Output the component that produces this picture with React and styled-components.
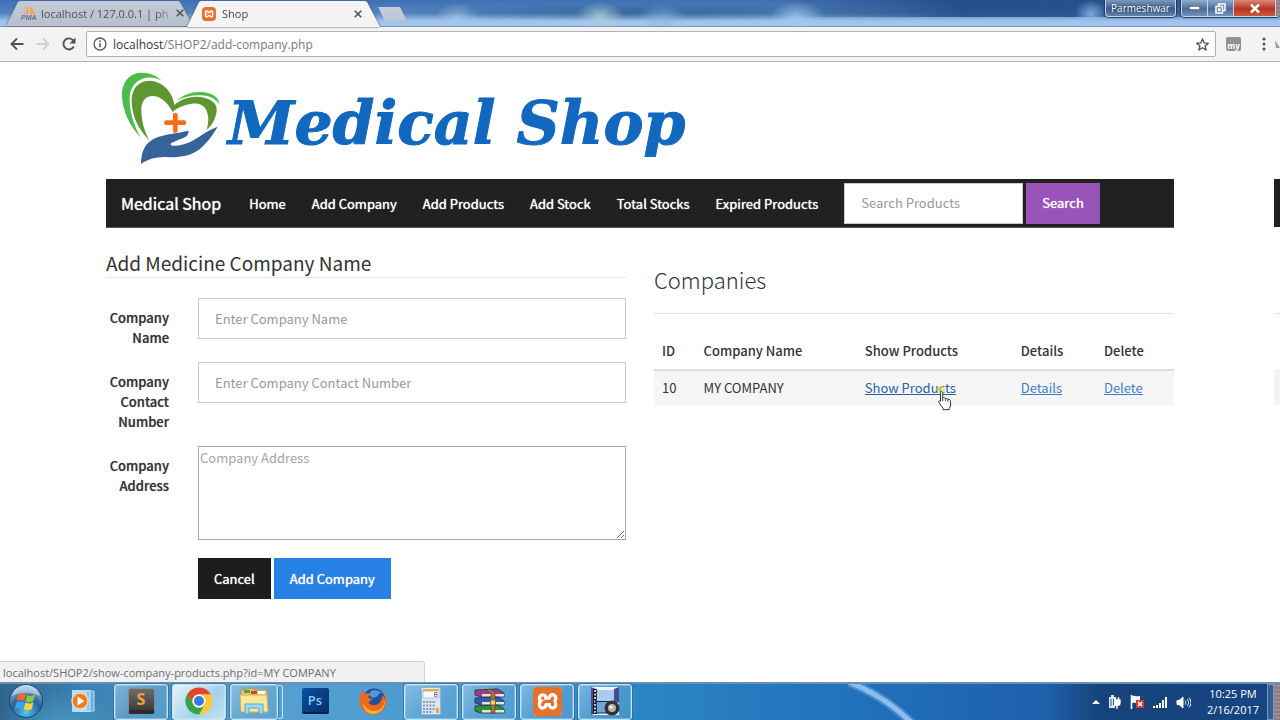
import React from 'react';
import styled, { createGlobalStyle, css } from 'styled-components';
import { SiXampp } from 'react-icons/si';

const GlobalStyle = createGlobalStyle`
  *, *::before, *::after { box-sizing: border-box; }
  body {
    margin: 0;
    background: #fff;
    color: #333;
    font: 13px/20px "Noto Sans CJK SC", "Noto Sans", sans-serif;
  }
  button, input, textarea { font: inherit; margin: 0; border-radius: 0; }
  svg { flex-shrink: 0; }
`;

const chromeFont = css`
  font-family: "Open Sans", "Noto Sans", sans-serif;
`;

const Window = styled.div`
  display: flex;
  flex-direction: column;
  min-height: 100vh;
  overflow: hidden;
`;

/* ---------- title bar and tabs ---------- */

const TitleBar = styled.header`
  ${chromeFont}
  position: relative;
  display: flex;
  justify-content: space-between;
  height: 27px;
  border-bottom: 1px solid #8094ae;
  background:
    radial-gradient(ellipse 22px 14px at 457px 17px, #a3c9e8aa, transparent),
    radial-gradient(ellipse 24px 14px at 600px 16px, #b0d4d8cc, transparent),
    radial-gradient(ellipse 26px 14px at 662px 18px, #88b6e4aa, transparent),
    radial-gradient(ellipse 28px 16px at 797px 17px, #a0cdf0cc, transparent),
    radial-gradient(ellipse 16px 14px at 1091px 14px, #8fc0f4cc, transparent),
    radial-gradient(ellipse 260px 9px at 650px 12px, #2d5c8cb0, transparent),
    linear-gradient(90deg, transparent 60%, #1d467ecc 75%, #1d4a82cc 88%, transparent) 0 0 / 100% 17px no-repeat,
    linear-gradient(#3f70b4, #5483be 50%, #9dc1ed 80%, #a7c8ef);
`;

const TabStrip = styled.nav`
  display: flex;
  padding-left: 6px;
`;

const TabShadow = styled.div`
  position: relative;
  z-index: ${(p) => (p.$active ? 2 : 1)};
  margin-bottom: ${(p) => (p.$active ? '-1px' : '0')};
  margin-right: -6px;
  filter: drop-shadow(0 0 1px #4a5a70);
`;

const Tab = styled.div`
  display: flex;
  align-items: center;
  gap: ${(p) => (p.$active ? '6px' : '5px')};
  width: ${(p) => (p.$active ? '193px' : '187px')};
  height: 100%;
  padding: ${(p) => (p.$active ? '0 15px' : '0 6px 0 15px')};
  clip-path: polygon(0 100%, 12px 2px, 14px 1px, calc(100% - 15px) 1px, calc(100% - 13px) 2px, 100% 100%);
  background: ${(p) => (p.$active ? '#f4f4f4' : 'linear-gradient(#c3cbd6, #b7c0ce)')};
  color: ${(p) => (p.$active ? '#444' : '#4b5058')};
  font-size: 11px;
  line-height: 16px;
`;

const TabTitle = styled.span`
  flex: 1;
  padding-top: 1px;
  white-space: nowrap;
  mask-image: linear-gradient(90deg, #000 90%, #0006);
`;

const TabClose = styled.button`
  display: flex;
  padding: 3px;
  border: 0;
  background: none;
  color: #555;
`;

const NewTab = styled.button`
  width: 29px;
  height: 14px;
  margin: 7px 0 0 4px;
  border: 0;
  clip-path: polygon(0 0, 22px 0, 100% 100%, 7px 100%);
  background: linear-gradient(#c4ced9, #bcc6d2);
`;

const WindowControls = styled.div`
  display: flex;
  gap: 5px;
  height: 17px;
  color: #fff;
`;

const glass = css`
  border: 1px solid #c3d3e8;
  border-top: 0;
  border-radius: 0 0 4px 4px;
  box-shadow: 0 0 1px 1px #203a5c;
`;

const UserBadge = styled.button`
  ${glass}
  width: 71px;
  padding: 0;
  background: linear-gradient(#7c98bc, #3c5e8c 55%, #6584ac);
  color: #fff;
  font-size: 10px;
  line-height: 16px;
  text-shadow: 0 0 2px #123;
`;

const ControlGroup = styled.div`
  ${glass}
  display: flex;
  overflow: hidden;
  border-right: 0;
`;

const ControlButton = styled.button`
  display: flex;
  align-items: center;
  justify-content: center;
  width: ${(p) => (p.$close ? '42px' : '26px')};
  padding: 0;
  border: 0;
  border-right: 1px solid #c3d3e8;
  background: ${(p) => (p.$close
    ? 'linear-gradient(#d88a78, #b83420 55%, #cc5a3c)'
    : 'linear-gradient(#93abc9, #4b6b98 55%, #7393b8)')};
`;

const EdgeNoise = styled.i`
  align-self: stretch;
  width: ${(p) => p.$w}px;
  background: repeating-linear-gradient(#b46a78 0 1px, #7da09a 1px 2px, #a08a6c 2px 3px, #7480a8 3px 4px);
`;

/* ---------- address bar ---------- */

const Toolbar = styled.div`
  ${chromeFont}
  display: flex;
  align-items: center;
  height: 35px;
  padding-left: 8px;
  border-bottom: 1px solid #b4b4b6;
  background: #f3f3f4;
`;

const IconButton = styled.button`
  display: flex;
  align-items: center;
  justify-content: center;
  width: ${(p) => p.$w}px;
  padding: 0;
  border: 0;
  background: none;
  color: ${(p) => (p.$dim ? '#cfcfd0' : '#505255')};
`;

const AddressBar = styled.div`
  display: flex;
  flex: 1;
  align-items: center;
  gap: 6px;
  height: 26px;
  margin-left: 8px;
  padding: 0 6px;
  border: 1px solid #b0b2b5;
  border-radius: 2px;
  background: #fff;
`;

const AddressField = styled.div`
  flex: 1;
  padding-top: 1px;
  font-size: 12px;
  line-height: 18px;
  color: #77797c;
  b { font-weight: 400; color: #35373a; }
`;

const Extension = styled.span`
  display: flex;
  align-items: flex-end;
  justify-content: center;
  width: 15px;
  height: 14px;
  margin: 0 12px 0 10px;
  border-radius: 2px;
  background: #929292;
  color: #fff;
  font-size: 8px;
  font-weight: 700;
  line-height: 11px;
`;

/* ---------- page ---------- */

const Page = styled.main`
  position: relative;
  flex: 1;
  padding: 10px 106px 32px;
`;

const Logo = styled.a`
  display: flex;
  gap: 8px;
  height: 107px;
  padding-left: 16px;
  color: #1268bf;
  text-decoration: none;
`;

const LogoText = styled.span`
  font: italic 700 60px/102px "DejaVu Serif", serif;
  -webkit-text-stroke: 1px #1268bf;
  white-space: nowrap;
`;

const NavBar = styled.nav`
  display: flex;
  align-items: center;
  min-height: 49px;
  padding: 0 15px;
  border-bottom: 1px solid #5a5a5a;
  background: #212121;
  white-space: nowrap;
`;

const Brand = styled.a`
  margin-right: 28px;
  color: #fff;
  font-size: 16px;
  text-decoration: none;
  text-shadow: 0 0 1px #fff;
`;

const NavLinks = styled.div`
  display: flex;
  gap: 26px;
`;

const NavLink = styled.a`
  padding-top: 1px;
  color: #fff;
  text-decoration: none;
  text-shadow: 0 0 1px #fff;
`;

const SearchForm = styled.form`
  display: flex;
  gap: 3px;
  margin-left: 26px;
`;

const TextInput = styled.input`
  width: ${(p) => p.$w || '100%'};
  height: 41px;
  padding: 0 16px 1px;
  border: 1px solid #c8c9cc;
  background: #fff;
  color: #333;
  outline: 0;
  &::placeholder { color: #999; opacity: 1; }
`;

const tones = { dark: '#1d1d1d', blue: '#2780e3', purple: '#9954bb' };

const Button = styled.button`
  height: 41px;
  padding: 0 16px;
  border: 0;
  background: ${(p) => tones[p.$tone]};
  color: #fff;
  text-shadow: 0 0 1px #fff;
`;

const Columns = styled.div`
  display: grid;
  grid-template-columns: 1fr 1fr;
  gap: 28px;
`;

const FormTitle = styled.h1`
  margin: 20px 0;
  border-bottom: 1px solid #e8e8ea;
  font-size: 19px;
  font-weight: 400;
  line-height: 29px;
`;

const CompanyForm = styled.form`
  display: grid;
  grid-template-columns: 63px 1fr;
  gap: 14px 29px;
`;

const FieldLabel = styled.label`
  padding-top: 10px;
  font-weight: 500;
  text-align: right;
  text-shadow: 0 0 1px #3338;
`;

const AddressArea = styled.textarea`
  display: block;
  width: 100%;
  height: 94px;
  padding: 1px;
  border: 1px solid #a9a9a9;
  color: #333;
  outline: 0;
  resize: vertical;
  &::placeholder { color: #a5a5a5; opacity: 1; }
`;

const FormActions = styled.div`
  display: flex;
  grid-column: 2;
  gap: 3px;
  padding-top: 4px;
`;

const ListTitle = styled.h2`
  margin: 34px 0 19px;
  padding-bottom: 17px;
  border-bottom: 1px solid #e3e3e5;
  font-size: 22px;
  font-weight: 300;
  line-height: 34px;
`;

const Table = styled.table`
  width: 100%;
  border-collapse: collapse;
  table-layout: fixed;
`;

const HeadCell = styled.th`
  width: ${(p) => p.$w};
  padding: 8px;
  border-bottom: 2px solid #dcdcdd;
  font-weight: 500;
  text-align: left;
  white-space: nowrap;
`;

const Cell = styled.td`
  padding: 7px 8px 8px;
  background: #f5f5f5;
  white-space: nowrap;
`;

const CellLink = styled.a`
  position: relative;
  color: ${(p) => (p.$hover ? '#2a5fa8' : '#3d7ecb')};
  text-decoration: underline;
`;

const Pointer = styled.svg`
  position: absolute;
  right: 4px;
  top: 12px;
  overflow: visible;
`;

const EdgeGhost = styled.div`
  position: absolute;
  right: 0;
  width: 6px;
  top: ${(p) => p.$top}px;
  height: ${(p) => p.$h}px;
  background: ${(p) => p.$color};
`;

const StatusBubble = styled.div`
  ${chromeFont}
  position: absolute;
  left: 0;
  bottom: 0;
  width: 425px;
  padding: 2px 3px 1px;
  border: solid #d2d2d2;
  border-width: 1px 1px 0 0;
  border-radius: 0 3px 0 0;
  background: #f1f1f2;
  color: #6c6e70;
  font-size: 11px;
  line-height: 17px;
`;

/* ---------- taskbar ---------- */

const Taskbar = styled.footer`
  ${chromeFont}
  display: flex;
  justify-content: space-between;
  height: 38px;
  border-top: 2px solid #6c8fb2;
  background:
    radial-gradient(ellipse 60px 34px at 60px 40px, #4fa5c8aa, transparent),
    linear-gradient(90deg, #2d6590, #3a80b0 6%, #56a0d0 20%, #4b9bd0 34%, #2b85c4 50%, #2272bc 66%, #1e5faa 82%, #16437a 86%, #164583);
`;

const TaskItems = styled.div`
  display: flex;
  gap: 4px;
`;

const TaskItem = styled.button`
  position: relative;
  display: flex;
  align-items: center;
  justify-content: center;
  width: ${(p) => p.$w || 54}px;
  height: 36px;
  padding: 0 0 2px;
  border: 1px solid transparent;
  background: none;
  ${(p) => p.$open && css`
    border-color: #c4e4f6;
    border-radius: 3px;
    box-shadow: inset 0 0 0 1px #ffffff40, 0 0 0 1px #27608e80;
    background: linear-gradient(135deg, #b5daf088, #7cb8de66 50%, #62a8d666);
  `}
  ${(p) => p.$focused && css`
    background: linear-gradient(135deg, #e4f3fa, #a4d2ea 60%, #c0e2f2);
  `}
  ${(p) => p.$stacked && css`
    margin-right: 6px;
    &::after {
      content: "";
      position: absolute;
      top: 0;
      right: -6px;
      width: 5px;
      height: 34px;
      border: solid #c4e4f6;
      border-width: 1px 1px 1px 0;
      border-radius: 0 3px 3px 0;
    }
  `}
`;

const Xampp = styled.span`
  display: flex;
  padding: 1px;
  border-radius: 4px;
  background: #fff;
  color: #e8702a;
  box-shadow: inset 0 0 0 2px #e8702a;
`;

const PsTile = styled.span`
  width: 27px;
  height: 26px;
  border-bottom: 2px solid #061f4c;
  border-radius: 2px;
  background: linear-gradient(135deg, #0b50a0, #0a2f6c);
  color: #84ccf8;
  font-size: 13px;
  font-weight: 600;
  line-height: 24px;
`;

const SublimeTile = styled.span`
  width: 27px;
  height: 26px;
  border: 1px solid #8c8c8c;
  border-bottom: 4px solid #2c2c2c;
  border-radius: 3px;
  background: linear-gradient(#6c6c6c, #3c3c3c);
  color: #f2a03c;
  font-size: 16px;
  font-weight: 700;
  line-height: 20px;
`;

const LightStreak = styled.svg`
  margin-left: 50px;
`;

const Tray = styled.div`
  display: flex;
  align-items: center;
  color: #fff;
`;

const TrayIcons = styled.div`
  display: flex;
  align-items: center;
  gap: 8px;
  margin-right: 15px;
`;

const Clock = styled.time`
  width: 54px;
  margin-right: 7px;
  font-size: 11px;
  line-height: 16px;
  text-align: center;
  white-space: nowrap;
`;

const ShowDesktop = styled.button`
  align-self: stretch;
  width: 7px;
  padding: 0;
  border: 1px solid #7698c0;
  background: #32608f;
`;

/* ---------- drawings ---------- */

const CloseGlyph = () => (
  <svg width="8" height="8" viewBox="0 0 8 8" stroke="currentColor" strokeWidth="1.6"><path d="M.7.7l6.6 6.6M7.3.7L.7 7.3" /></svg>
);

const HeartLogo = () => (
  <svg width="98" height="93" viewBox="48 24 294 279">
    <path fill="#4cbd4c" d="M104 221C75 190 48 143 48 94 48 50 74 26 108 26c24 0 45 9 59 24-19-10-40-12-57-6-26 9-40 31-39 66 1 42 17 82 33 111z" />
    <path fill="#5f9632" d="M130 230C100 198 78 161 77 112c-1-36 20-62 53-62 38 0 71 34 75 73 24-22 62-30 92-21 27 7 37 22 35 39-2 20-12 41-30 57 5-20 7-37 2-51-7-25-27-31-50-27-25 4-44 14-54 24-16-31-39-49-62-48-22 1-32 19-32 42 0 33 10 66 24 92z" />
    <path fill="#4cbd4c" d="M212 110c18-16 43-26 70-26 34 0 58 15 58 37-13-20-34-28-61-27-25 0-47 6-67 16z" />
    <path fill="#35639a" d="M105 299c1-28 7-49 22-63 20-18 42-21 67-26 21-3 37-7 54-10-1 16-9 20-25 25l-25 11c-8 4-4 10 9 9 29-1 53-14 77-30 17-12 35-21 51-27-22 37-46 67-75 80-25 12-54 13-81 11-26-1-51 5-74 20z" />
    <path stroke="#f96b16" strokeWidth="14" strokeLinecap="round" d="M208 153v47M181 176h53" />
  </svg>
);

const HandPointer = () => (
  <Pointer width="14" height="20" viewBox="0 0 14 20" aria-hidden="true">
    <circle cx="3" cy="0" r="4" fill="#d8e040" opacity=".6" />
    <path d="M3 1.5c1.2 0 1.7.8 1.7 1.8v4.5c1.4-.5 2.4 0 2.7.8 1.2-.4 2.2 0 2.5.8 1.5-.3 2.6.4 2.6 2v3.600c0 1.500-.7 2.500-1.200 3.500v1.200H5v-1.500C3.700 16.500 2 14.500.8 12.200c-.5-1.200.7-2 1.700-1V3.300c0-1 0-1.800.5-1.800z" fill="#fff" stroke="#333" strokeWidth="1" />
    <path d="M4.700 8v3M7.400 8.800V11M9.900 9.700V12" stroke="#333" strokeWidth=".9" />
  </Pointer>
);

const PmaIcon = () => (
  <svg width="15" height="14" viewBox="0 0 15 14">
    <path d="M6 0c2 2 2 5 1 8H2c2-1 4-4 4-8zM8.500 1c3 1 5 4 5.500 7H8.500c.6-2 .6-4 0-7z" fill="#f5a544" />
    <text x="0" y="14" fontSize="7" fontWeight="700" fontStyle="italic" fill="#6c6c90" fontFamily="Liberation Sans">PMA</text>
  </svg>
);

const StartOrb = () => (
  <svg width="36" height="36" viewBox="0 0 36 36">
    <defs>
      <radialGradient id="orb" cx=".5" cy=".85" r=".9">
        <stop offset="0" stopColor="#55c4e8" /><stop offset=".5" stopColor="#24639c" /><stop offset="1" stopColor="#b8d4e6" />
      </radialGradient>
    </defs>
    <circle cx="18" cy="18" r="16.500" fill="url(#orb)" stroke="#1c4468" />
    <path d="M10 12c3-2 5-2 8-.5l-1.500 6.500c-3-1.500-5-1.300-8 .3z" fill="#ee6a2c" />
    <path d="M19 12c3 1.300 5 1.300 8-.5l-1.500 6.500c-3 1.800-5 1.600-8 .3z" fill="#8cc63e" />
    <path d="M8.300 19.500c3-1.600 5-1.800 8-.3L14.800 26c-3-1.500-5-1.500-8 .2z" fill="#3aa4e8" />
    <path d="M17.300 19.500c3 1.300 5 1.500 8-.3L23.800 26c-3 1.700-5 1.500-8 .2z" fill="#fcd23c" />
    <path d="M4 13C7 4 14 2 18 2s11 2 14 11c-8-4-20-4-28 0z" fill="#fff" opacity=".4" />
  </svg>
);

const MediaIcon = () => (
  <svg width="24" height="24" viewBox="0 0 24 24">
    <path d="M7 2h16v20H7z" fill="#6cb0d8" stroke="#b8dcf0" /><path d="M4 1.500h15v21H4z" fill="#90c8e4" stroke="#d0e8f4" />
    <path d="M1 1h15v22H1z" fill="#b8dcf0" />
    <circle cx="9" cy="12" r="8" fill="#f07c1c" stroke="#d8dce0" strokeWidth="1.500" /><path d="M6.500 7.500l7 4.500-7 4.500z" fill="#fff" />
  </svg>
);

const ChromeIcon = () => (
  <svg width="28" height="28" viewBox="0 0 28 28">
    <circle cx="14" cy="14" r="13.500" fill="#fcc934" />
    <path d="M2.300 7.250A13.500 13.500 0 0 1 25.700 7.250H14A6.750 6.750 0 0 0 8.150 17.400z" fill="#e2432f" />
    <path d="M2.300 7.250A13.500 13.500 0 0 0 14 27.500L19.850 17.400A6.750 6.750 0 0 1 8.150 17.400z" fill="#30a350" />
    <circle cx="14" cy="14" r="6.500" fill="#fff" /><circle cx="14" cy="14" r="5" fill="#3b78e7" />
  </svg>
);

const ExplorerIcon = () => (
  <svg width="30" height="28" viewBox="0 0 30 28">
    <path d="M2 3l11-2 2 2h13v22H2z" fill="#e9c964" stroke="#b89848" />
    <path d="M5 3h6v3H5z" fill="#49a84c" /><path d="M12 4h6v3h-6z" fill="#d84030" /><path d="M19 4h7v3h-7z" fill="#fff" />
    <path d="M1 8h27l1 17H2z" fill="#f7e79c" stroke="#cfae5c" />
    <path d="M6 27V17h18v10h-4v-6H10v6z" fill="#9ed8f2" stroke="#5ca4cc" />
  </svg>
);

const FirefoxIcon = () => (
  <svg width="28" height="28" viewBox="0 0 28 28">
    <circle cx="15" cy="12.500" r="11" fill="#234f9c" /><path d="M12 4c5-2 9 0 11 3-3-1-4 0-4 2l-5 2-4-3z" fill="#4e9ad8" />
    <path d="M3 4l3 3c2-1 4-1 6 0-2 1-3 2-2.500 4l4 .8c-1 2-3 2.200-4 3.400 1.500 3 6 3.500 9 2 3.500-2 5-5 4.500-9 2 1 2.500 3 2.700 4.500C27 6 24 3 22 2c5 3 6 8 5.500 13C26.500 22 21 27.500 14 27.500 6 27.500.5 21 .5 14 .5 10 1.500 6 3 4z" fill="#e76b1e" />
    <path d="M26 9c1 9-4 15-11 15-5 0-9-3-11-8 0 7 5 11 10 11 8 0 14-8 12-18z" fill="#fbb034" />
  </svg>
);

const CalcIcon = () => (
  <svg width="20" height="28" viewBox="0 0 20 28">
    <rect x=".5" y=".5" width="19" height="27" rx="1" fill="#dbe8f2" stroke="#98b4cc" />
    <path d="M2 2h16v2H2z" fill="#f0b044" /><path d="M2 4h16v7H2z" fill="#f8fcff" stroke="#88a4bc" strokeWidth=".6" />
    <path d="M13.500 5.500h2.500v4h-2.500zM13.500 7.500H16" fill="none" stroke="#667" strokeWidth=".8" />
    <path d="M2 15h13M2 18.500h13M2 22h13M2 25h10" stroke="#7e9cb8" strokeWidth="2" strokeDasharray="2 1.200" />
    <path d="M15 21h3v5h-3z" fill="#f0a434" />
  </svg>
);

const WinrarIcon = () => (
  <svg width="31" height="27" viewBox="0 0 31 27">
    {[['#93408c', 2], ['#3656b4', 10], ['#2e8c3c', 18]].map(([c, y]) => (
      <g key={c}>
        <path d={`M1 ${y}L24 ${y - 1}l6 4v4H7L1 ${y + 5}z`} fill={c} stroke="#222" strokeWidth=".7" />
        <path d={`M8 ${y + 4}h22v2.500H8z`} fill="#e8e4d4" />
      </g>
    ))}
    <path d="M16 1l5 3v21h-4V5l-5-3z" fill="#a8703c" stroke="#5a3818" strokeWidth=".6" />
    <path d="M16.500 12h5v5h-5z" fill="#f0d050" stroke="#664" />
  </svg>
);

const MovieIcon = () => (
  <svg width="30" height="30" viewBox="0 0 30 30">
    <path d="M1 1h28v28H1z" fill="#eef4fa" /><path d="M1 1l5 2v24l-5 2zM29 1l-5 2v12l5 2z" fill="#4a4898" />
    <path d="M6 4h18v11H6z" fill="#a8ccee" /><path d="M6 16h18v11H6z" fill="#70a4dc" />
    <path d="M5 3v25" stroke="#111" strokeWidth="3.500" /><path d="M5 4v24" stroke="#fff" strokeWidth="1.500" strokeDasharray="2 1.500" />
    <path d="M5 15.500h20M5 27h18" stroke="#223" />
    <circle cx="22" cy="22" r="7.500" fill="#333" /><circle cx="22" cy="22" r="4" fill="#b4b4b4" /><circle cx="21" cy="21" r="1.500" fill="#fff" />
  </svg>
);

/* ---------- data ---------- */

const navItems = ['Home', 'Add Company', 'Add Products', 'Add Stock', 'Total Stocks', 'Expired Products'];

const tableHead = [
  ['ID', '8%'],
  ['Company Name', '31%'],
  ['Show Products', '30%'],
  ['Details', '16%'],
  ['Delete', '15%'],
];

const companies = [{ id: 10, name: 'MY COMPANY' }];

export default function App() {
  return (
    <>
      <GlobalStyle />
      <Window>
        <TitleBar>
          <TabStrip>
            <TabShadow>
              <Tab>
                <PmaIcon />
                <TabTitle>localhost / 127.0.0.1 | ph</TabTitle>
                <TabClose aria-label="Close tab"><CloseGlyph /></TabClose>
              </Tab>
            </TabShadow>
            <TabShadow $active>
              <Tab $active>
                <Xampp><SiXampp size={12} /></Xampp>
                <TabTitle>Shop</TabTitle>
                <TabClose aria-label="Close tab"><CloseGlyph /></TabClose>
              </Tab>
            </TabShadow>
            <NewTab aria-label="New tab" />
          </TabStrip>
          <WindowControls>
            <UserBadge>Parmeshwar</UserBadge>
            <ControlGroup>
              <ControlButton aria-label="Minimize">
                <svg width="11" height="4"><rect x=".5" y=".5" width="10" height="3" fill="#fff" stroke="#456" strokeWidth=".5" /></svg>
              </ControlButton>
              <ControlButton aria-label="Restore">
                <svg width="11" height="11" fill="none" stroke="#fff" strokeWidth="1.500"><path d="M3.500 3V1H10v6.500H8M1 3.500h6.500V10H1zM3.500 6h1.500v1.500H3.500z" /></svg>
              </ControlButton>
              <ControlButton $close aria-label="Close">
                <svg width="10" height="9" stroke="#fff" strokeWidth="2.500"><path d="M1 .5l8 8M9 .5l-8 8" /></svg>
              </ControlButton>
              <EdgeNoise $w={4} />
            </ControlGroup>
          </WindowControls>
        </TitleBar>

        <Toolbar>
          <IconButton $w={18} aria-label="Back">
            <svg width="14" height="14" viewBox="0 0 14 14" fill="none" stroke="currentColor" strokeWidth="1.800"><path d="M13.500 7H2M7 1.500L1.500 7 7 12.500" /></svg>
          </IconButton>
          <IconButton $w={34} $dim aria-label="Forward">
            <svg width="14" height="14" viewBox="0 0 14 14" fill="none" stroke="currentColor" strokeWidth="1.800"><path d="M.5 7H12M7 1.500L12.500 7 7 12.500" /></svg>
          </IconButton>
          <IconButton $w={18} aria-label="Reload">
            <svg width="14" height="14" viewBox="0 0 14 14"><path d="M11.800 9.500A5.500 5.500 0 1 1 10.900 3.100L12 4.300" fill="none" stroke="currentColor" strokeWidth="1.900" /><path d="M13.500.5v6h-6z" fill="currentColor" /></svg>
          </IconButton>
          <AddressBar>
            <svg width="14" height="14" viewBox="0 0 14 14" fill="none" stroke="#55575a" strokeWidth="1.300"><circle cx="7" cy="7" r="6" /><path d="M7 6.200v4M7 3.500v1.500" strokeWidth="1.600" /></svg>
            <AddressField><b>localhost</b>/SHOP2/add-company.php</AddressField>
            <IconButton $w={14} aria-label="Bookmark this page">
              <svg width="13" height="13" viewBox="0 0 24 24" fill="none" stroke="currentColor" strokeWidth="2.400"><path d="M12 2l3 7 7.500.7-5.700 5 1.700 7.300L12 18l-6.500 4 1.700-7.300-5.700-5L9 9z" /></svg>
            </IconButton>
          </AddressBar>
          <Extension>my</Extension>
          <IconButton $w={22} aria-label="Menu">
            <svg width="4" height="14" fill="currentColor"><circle cx="2" cy="2" r="1.500" /><circle cx="2" cy="7" r="1.500" /><circle cx="2" cy="12" r="1.500" /></svg>
          </IconButton>
          <svg width="5" height="8"><path d="M0 0l5 8H1z" fill="#9a9ca0" /></svg>
        </Toolbar>

        <Page>
          <Logo href="#home">
            <HeartLogo />
            <LogoText>Medical Shop</LogoText>
          </Logo>

          <NavBar>
            <Brand href="#home">Medical Shop</Brand>
            <NavLinks>
              {navItems.map((item) => <NavLink key={item} href="#nav">{item}</NavLink>)}
            </NavLinks>
            <SearchForm>
              <TextInput $w="179px" placeholder="Search Products" aria-label="Search Products" />
              <Button type="button" $tone="purple">Search</Button>
            </SearchForm>
          </NavBar>

          <Columns>
            <section>
              <FormTitle>Add Medicine Company Name</FormTitle>
              <CompanyForm>
                <FieldLabel htmlFor="name">Company Name</FieldLabel>
                <div><TextInput id="name" placeholder="Enter Company Name" /></div>
                <FieldLabel htmlFor="contact">Company Contact Number</FieldLabel>
                <div><TextInput id="contact" placeholder="Enter Company Contact Number" /></div>
                <FieldLabel htmlFor="address">Company Address</FieldLabel>
                <AddressArea id="address" placeholder="Company Address" />
                <FormActions>
                  <Button type="reset" $tone="dark">Cancel</Button>
                  <Button type="button" $tone="blue">Add Company</Button>
                </FormActions>
              </CompanyForm>
            </section>

            <section>
              <ListTitle>Companies</ListTitle>
              <Table>
                <thead>
                  <tr>{tableHead.map(([title, w]) => <HeadCell key={title} $w={w}>{title}</HeadCell>)}</tr>
                </thead>
                <tbody>
                  {companies.map((c) => (
                    <tr key={c.id}>
                      <Cell>{c.id}</Cell>
                      <Cell>{c.name}</Cell>
                      <Cell><CellLink $hover href="#products">Show Products<HandPointer /></CellLink></Cell>
                      <Cell><CellLink href="#details">Details</CellLink></Cell>
                      <Cell><CellLink href="#delete">Delete</CellLink></Cell>
                    </tr>
                  ))}
                </tbody>
              </Table>
            </section>
          </Columns>

          <EdgeGhost $top={117} $h={48} $color="#212121" />
          <EdgeGhost $top={251} $h={1} $color="#e3e3e5" />
          <EdgeGhost $top={307} $h={36} $color="#f3f3f3" />
          <StatusBubble>localhost/SHOP2/show-company-products.php?id=MY COMPANY</StatusBubble>
        </Page>

        <Taskbar>
          <TaskItems>
            <TaskItem $w={52} aria-label="Start"><StartOrb /></TaskItem>
            <TaskItem aria-label="Media Player"><MediaIcon /></TaskItem>
            <TaskItem $open aria-label="Sublime Text"><SublimeTile>S</SublimeTile></TaskItem>
            <TaskItem $open $focused aria-label="Chrome"><ChromeIcon /></TaskItem>
            <TaskItem $open $stacked $w={48} aria-label="Explorer"><ExplorerIcon /></TaskItem>
            <TaskItem aria-label="Photoshop"><PsTile>Ps</PsTile></TaskItem>
            <TaskItem aria-label="Firefox"><FirefoxIcon /></TaskItem>
            <TaskItem $open aria-label="Calculator"><CalcIcon /></TaskItem>
            <TaskItem $open aria-label="WinRAR"><WinrarIcon /></TaskItem>
            <TaskItem $open aria-label="XAMPP"><Xampp><SiXampp size={27} /></Xampp></TaskItem>
            <TaskItem $open aria-label="Movie Maker"><MovieIcon /></TaskItem>
          </TaskItems>
          <LightStreak width="80" height="36" viewBox="0 0 80 36" fill="none"><path d="M2-2C22 6 46 20 66 40" stroke="#8cc4f4" strokeWidth="9" opacity=".35" /><path d="M2-2C22 6 46 20 66 40" stroke="#9ccbf6" strokeWidth="5" opacity=".8" /></LightStreak>
          <Tray>
            <TrayIcons>
              <svg width="8" height="4"><path d="M4 0l4 4H0z" fill="#fff" /></svg>
              <svg width="14" height="14" viewBox="0 0 14 14"><path d="M1 2h6v11H1zM3 0h3v2H3z" fill="#dce4ec" /><path d="M6 5h6v3c0 2-1 2.500-3 2.500S6 10 6 8zM7.500 2v3M10.500 2v3M9 10v4" fill="#fff" stroke="#fff" strokeWidth="1.300" /><path d="M3 4v7M5.500 4v6" stroke="#456" /></svg>
              <svg width="15" height="14" viewBox="0 0 15 14"><path d="M1.500 0v14" stroke="#fff" strokeWidth="1.600" /><path d="M2 1c3-1 4 1 8 0v7c-4 1-5-1-8 0z" fill="#f4f6fa" /><path d="M6 5h8v8H6z" fill="#d43a34" /><path d="M8 7l4 4M12 7l-4 4" stroke="#fff" strokeWidth="1.500" /></svg>
              <svg width="15" height="12" stroke="#fff" strokeWidth="2"><path d="M1 12v-2M4 12V9M7 12V7M10 12V4M13 12V1" /></svg>
              <svg width="15" height="13" viewBox="0 0 15 13" fill="none" stroke="#fff"><path d="M1 4.500h2l4-3.500v11L3 8.500H1z" fill="#fff" /><path d="M9 4.500c1 1.200 1 2.800 0 4M11 3c2 2 2 5 0 7M13 1.500c2.500 3 2.500 7 0 10" /></svg>
            </TrayIcons>
            <Clock>10:25 PM<br />2/16/2017</Clock>
            <ShowDesktop aria-label="Show desktop" />
            <EdgeNoise $w={6} />
          </Tray>
        </Taskbar>
      </Window>
    </>
  );
}
